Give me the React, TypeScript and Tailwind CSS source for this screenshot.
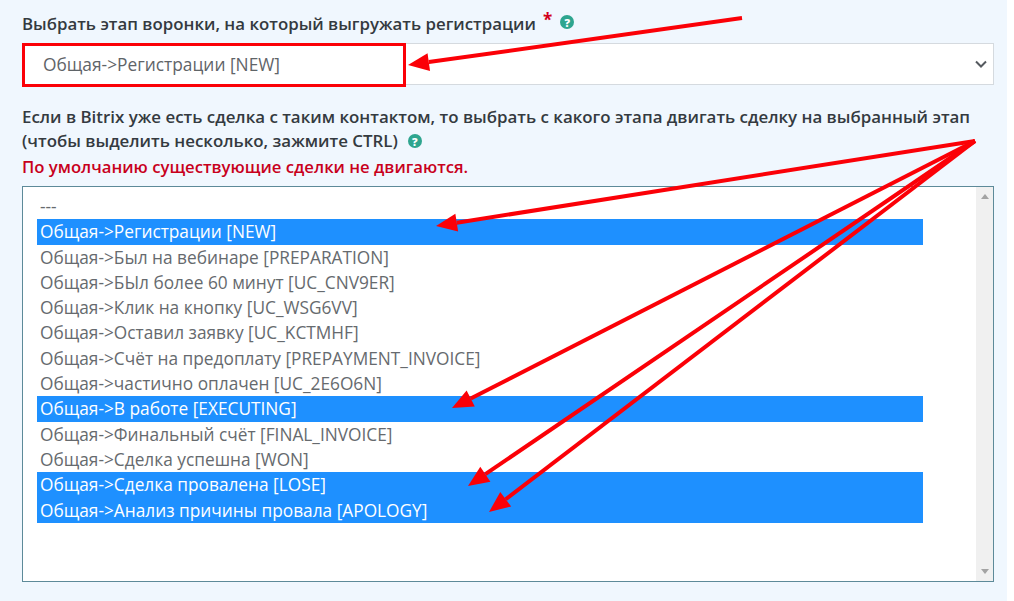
const options = [
  { label: "---" },
  { label: "Общая->Регистрации [NEW]", selected: true },
  { label: "Общая->Был на вебинаре [PREPARATION]" },
  { label: "Общая->БЫл более 60 минут [UC_CNV9ER]" },
  { label: "Общая->Клик на кнопку [UC_WSG6VV]" },
  { label: "Общая->Оставил заявку [UC_KCTMHF]" },
  { label: "Общая->Счёт на предоплату [PREPAYMENT_INVOICE]" },
  { label: "Общая->частично оплачен [UC_2E6O6N]" },
  { label: "Общая->В работе [EXECUTING]", selected: true },
  { label: "Общая->Финальный счёт [FINAL_INVOICE]" },
  { label: "Общая->Сделка успешна [WON]" },
  { label: "Общая->Сделка провалена [LOSE]", selected: true },
  { label: "Общая->Анализ причины провала [APOLOGY]", selected: true },
];

const arrows = [
  { x1: 742, y1: 18, x2: 428, y2: 62, hx: 408, hy: 65 },
  { x1: 975, y1: 141, x2: 456, y2: 223, hx: 436, hy: 226 },
  { x1: 975, y1: 141, x2: 470, y2: 399, hx: 452, hy: 408 },
  { x1: 975, y1: 141, x2: 484, y2: 475, hx: 468, hy: 486 },
  { x1: 975, y1: 141, x2: 505, y2: 500, hx: 489, hy: 512 },
];

function Help() {
  return (
    <span className="flex h-[14px] w-[14px] items-center justify-center rounded-full bg-[#2ea58f] text-[11px] font-extrabold leading-none text-white">
      ?
    </span>
  );
}

function Arrows() {
  return (
    <svg className="pointer-events-none absolute left-0 top-0" width="1014" height="601">
      {arrows.map((a, i) => {
        const dx = a.hx - a.x1;
        const dy = a.hy - a.y1;
        const len = Math.hypot(dx, dy);
        const ux = dx / len;
        const uy = dy / len;
        const bx = a.hx - ux * 21;
        const by = a.hy - uy * 21;
        const pts = `${a.hx},${a.hy} ${bx - uy * 9},${by + ux * 9} ${bx + uy * 9},${by - ux * 9}`;
        return (
          <g key={i}>
            <line x1={a.x1} y1={a.y1} x2={bx} y2={by} stroke="#fb0007" strokeWidth="4" />
            <polygon points={pts} fill="#fb0007" />
          </g>
        );
      })}
    </svg>
  );
}

export default function App() {
  return (
    <div className="relative h-[601px] w-[1014px] overflow-hidden bg-white font-['Open_Sans','Noto_Sans',sans-serif]">
      <div className="h-full w-[1007px] bg-[#f0f7fe] pl-[22px] pr-[13px] pt-[12px] text-[#343a40]">
        <div className="flex h-[31px] items-start gap-[7px] text-[16.85px] font-semibold leading-[23px]">
          <span>Выбрать этап воронки, на который выгружать регистрации</span>
          <span className="text-[17px] font-bold leading-[16px] text-[#d2001a]">*</span>
          <span className="pl-[1px] pt-[3px]">
            <Help />
          </span>
        </div>

        <div className="relative flex h-[42px] items-center justify-between border border-[#d5dadf] bg-white pl-[20px] pr-[6px] text-[17.35px] text-[#5f6468]">
          <span>Общая-&gt;Регистрации [NEW]</span>
          <svg width="12" height="8" viewBox="0 0 12 8" fill="none" stroke="#555a5f" strokeWidth="2">
            <path d="M1 1.5 6 6.5 11 1.5" />
          </svg>
          <div className="absolute -left-px -top-px h-[44px] w-[384px] border-[3px] border-[#fb0007]" />
        </div>

        <div className="mt-[20px] text-[16.9px] font-semibold leading-[24px]">
          <div className="whitespace-nowrap">Если в Bitrix уже есть сделка с таким контактом, то выбрать с какого этапа двигать сделку на выбранный этап</div>
          <div className="flex items-center gap-[10px]">
            <span>(чтобы выделить несколько, зажмите CTRL)</span>
            <Help />
          </div>
          <div className="mt-[2px] text-[16.7px] text-[#c8001c]">По умолчанию существующие сделки не двигаются.</div>
        </div>

        <div className="mt-[7px] flex h-[396px] border border-[#5d8a99] bg-white">
          <div className="flex-1 pl-[14px] pr-[53px] pt-[7px]">
            {options.map((o) => (
              <div
                key={o.label}
                className={`h-[25.3px] whitespace-nowrap pl-[3px] text-[17.3px] leading-[25px] ${
                  o.selected ? "bg-[#1e90ff] text-white" : "text-[#666a6e]"
                }`}
              >
                {o.label}
              </div>
            ))}
          </div>
          <div className="flex w-[17px] flex-col items-center justify-between bg-[#f0f0f0] py-[7px]">
            <div className="h-0 w-0 border-x-[4px] border-b-[5px] border-x-transparent border-b-[#a3a3a3]" />
            <div className="h-0 w-0 border-x-[4px] border-t-[5px] border-x-transparent border-t-[#a3a3a3]" />
          </div>
        </div>
      </div>
      <Arrows />
    </div>
  );
}
